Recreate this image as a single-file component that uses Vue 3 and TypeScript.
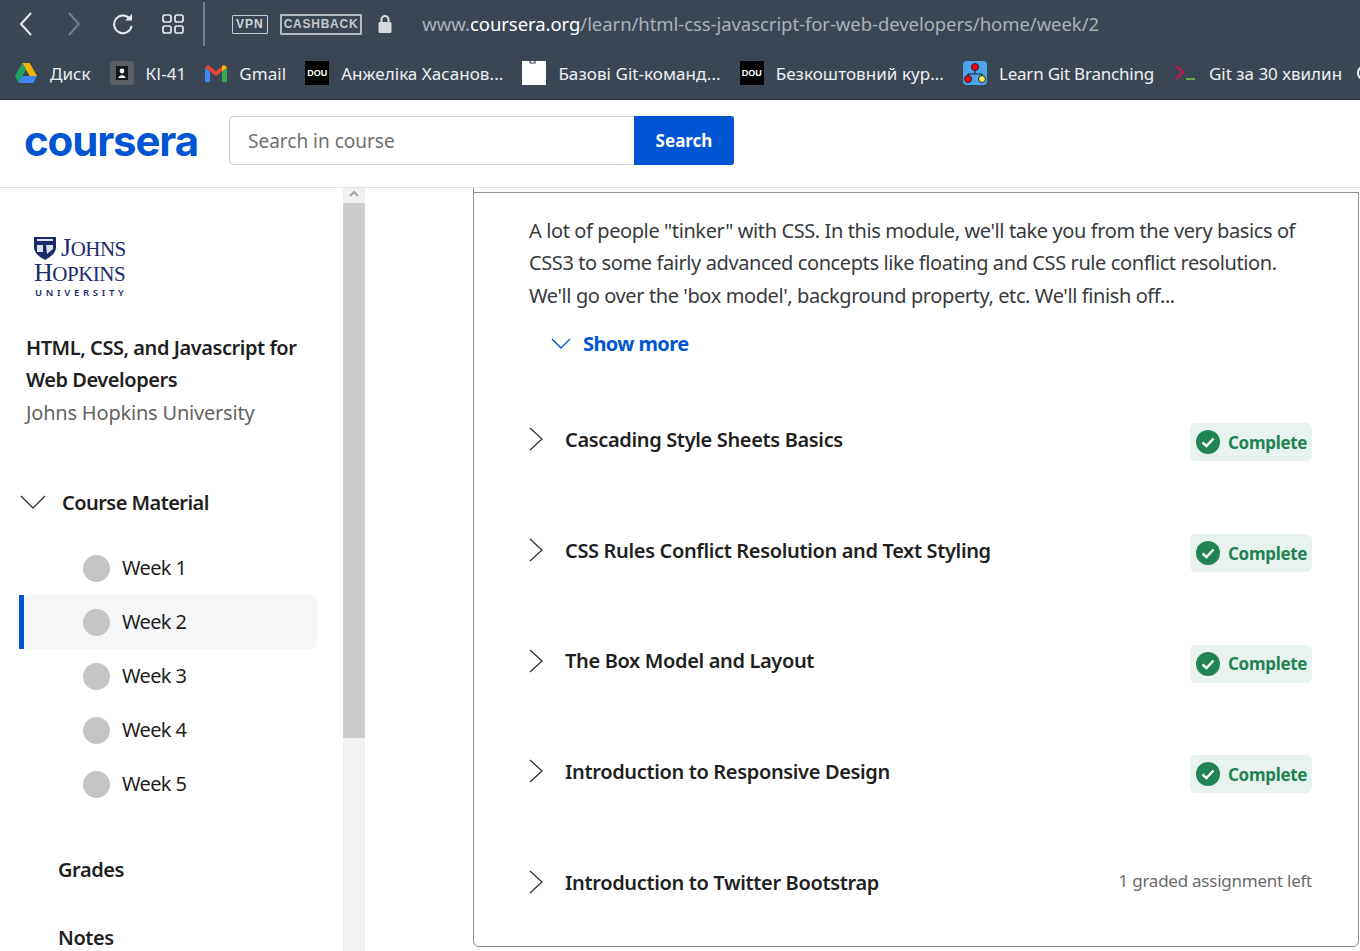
<script setup lang="ts">
const bookmarks = [
  { id: 'drive', label: 'Диск' },
  { id: 'ki', label: 'КІ-41' },
  { id: 'gmail', label: 'Gmail' },
  { id: 'dou', label: 'Анжеліка Хасанов...' },
  { id: 'sheet', label: 'Базові Git-команд...' },
  { id: 'dou', label: 'Безкоштовний кур...' },
  { id: 'branch', label: 'Learn Git Branching' },
  { id: 'term', label: 'Git за 30 хвилин' },
]
const weeks = ['Week 1', 'Week 2', 'Week 3', 'Week 4', 'Week 5']
const lessons = [
  { title: 'Cascading Style Sheets Basics', done: true },
  { title: 'CSS Rules Conflict Resolution and Text Styling', done: true },
  { title: 'The Box Model and Layout', done: true },
  { title: 'Introduction to Responsive Design', done: true },
  { title: 'Introduction to Twitter Bootstrap', done: false },
]
</script>

<template>
  <div class="page">
    <div class="browser">
      <div class="toolbar">
        <svg class="nav" width="18" height="24" viewBox="0 0 18 24"><path d="M14 1 L4 12 L14 23" fill="none" stroke="#e8eaed" stroke-width="2"/></svg>
        <svg class="nav next" width="18" height="24" viewBox="0 0 18 24"><path d="M4 1 L14 12 L4 23" fill="none" stroke="#76808c" stroke-width="2"/></svg>
        <svg class="reload" width="22" height="22" viewBox="0 0 22 22"><path d="M17.5 5.5 A8.8 8.8 0 1 0 19.6 13" fill="none" stroke="#e8eaed" stroke-width="2"/><path d="M13 7.5 H20 V1 Z" fill="#e8eaed"/></svg>
        <svg class="grid" width="22" height="22" viewBox="0 0 22 22"><g fill="none" stroke="#e8eaed" stroke-width="1.7"><rect x="1" y="2" width="8" height="7" rx="2"/><rect x="13" y="2" width="8" height="7" rx="2"/><rect x="1" y="13" width="8" height="7" rx="2"/><rect x="13" y="13" width="8" height="7" rx="2"/></g></svg>
        <div class="sep"></div>
        <span class="tag vpn">VPN</span>
        <span class="tag cash">CASHBACK</span>
        <svg class="lock" width="14" height="20" viewBox="0 0 14 20"><path d="M3.5 9 V5.5 a3.5 3.5 0 0 1 7 0 V9" fill="none" stroke="#d6dadd" stroke-width="2"/><rect x="0.5" y="8" width="13" height="11" rx="1.5" fill="#d6dadd"/></svg>
        <span class="url">www.<b>coursera.org</b>/learn/html-css-javascript-for-web-developers/home/week/2</span>
      </div>
      <div class="bookmarks">
        <div v-for="b in bookmarks" :key="b.label" class="bm" :class="'bm-' + b.id">
          <svg v-if="b.id === 'drive'" width="22" height="20" viewBox="0 0 22 20"><path d="M7.300 0 H14.700 L22 13 H14.700 Z" fill="#f5b400"/><path d="M7.300 0 L0 13 L3.700 20 L11 6.500 Z" fill="#1fa463"/><path d="M3.700 20 H18.300 L22 13 H7.300 Z" fill="#4285f4"/></svg>
          <span v-else-if="b.id === 'ki'" class="fav ki"><svg width="14" height="14" viewBox="0 0 14 14"><rect x="1" y="0" width="12" height="14" fill="#17181a"/><circle cx="7" cy="5" r="2.4" fill="#eee"/><path d="M3 12 q4 -6 8 0 Z" fill="#eee"/></svg></span>
          <svg v-else-if="b.id === 'gmail'" width="22" height="17" viewBox="0 0 22 17"><path d="M0 2.500 V17 H5 V6.500 Z" fill="#4285f4"/><path d="M22 2.500 V17 H17 V6.500 Z" fill="#34a853"/><path d="M0 2.500 L11 11 L22 2.500 L19 0 L11 6 L3 0 Z" fill="#ea4335"/><path d="M17 6.500 L22 2.500 L19 0 L17 1.500 Z" fill="#fbbc04"/></svg>
          <span v-else-if="b.id === 'dou'" class="fav dou">DOU</span>
          <svg v-else-if="b.id === 'sheet'" width="24" height="24" viewBox="0 0 24 24"><rect width="24" height="24" fill="#fff"/><path d="M8 0 V2 H13 V0" fill="none" stroke="#3a4654" stroke-width="1.200"/></svg>
          <svg v-else-if="b.id === 'branch'" width="24" height="24" viewBox="0 0 24 24"><rect width="24" height="24" rx="4" fill="#4da3ec"/><path d="M12 7 V12 M5 17 V13 H19 V17" fill="none" stroke="#222" stroke-width="1.2"/><circle cx="12" cy="6" r="3.500" fill="#f01" stroke="#222"/><circle cx="5" cy="18" r="3.500" fill="#f01" stroke="#222"/><circle cx="19" cy="18" r="3.500" fill="#ee5" stroke="#222"/></svg>
          <svg v-else width="20" height="16" viewBox="0 0 20 16"><path d="M1 1 L8 7 L1 14" fill="none" stroke="#a8224a" stroke-width="2.800"/><rect x="11" y="13" width="9" height="2" fill="#6aa84f"/></svg>
          <span class="bm-label">{{ b.label }}</span>
        </div>
        <span class="bm-clipped"></span>
      </div>
    </div>

    <header class="site-header">
      <span class="logo">coursera</span>
      <div class="search">
        <div class="search-input">Search in course</div>
        <button class="search-btn">Search</button>
      </div>
    </header>

    <div class="content">
      <aside class="side">
        <div class="side-inner">
          <div class="jhu">
            <svg class="shield" width="22" height="23" viewBox="0 0 22 23"><path d="M0 0 H22 V11 Q21 18 11 23 Q1 18 0 11 Z" fill="#1b2c6b"/><rect x="3" y="8" width="6" height="7" fill="#dfe3ef"/><path d="M12 8 L19 8 L19 12 L13 17 Z" fill="#dfe3ef"/><rect x="3" y="2" width="16" height="2" fill="#dfe3ef"/></svg>
            <div class="jhu-text">
              <div class="j1">J<small>OHNS</small></div>
              <div class="j2">H<small>OPKINS</small></div>
              <div class="j3">UNIVERSITY</div>
            </div>
          </div>
          <div class="course-title">HTML, CSS, and Javascript for<br>Web Developers</div>
          <div class="course-org">Johns Hopkins University</div>
          <div class="material">
            <svg width="26" height="14" viewBox="0 0 26 14"><path d="M1 1 L13 13 L25 1" fill="none" stroke="#333" stroke-width="1.300"/></svg>
            <span>Course Material</span>
          </div>
          <nav class="weeks">
            <div v-for="(w, i) in weeks" :key="w" class="week" :class="{ active: i === 1 }">
              <span class="dot"></span><span class="week-label">{{ w }}</span>
            </div>
          </nav>
          <div class="side-link grades">Grades</div>
          <div class="side-link notes">Notes</div>
        </div>
        <div class="scrollbar">
          <div class="sb-up"><svg width="10" height="6" viewBox="0 0 10 6"><path d="M1 5 L5 1 L9 5" fill="none" stroke="#a3a3a3" stroke-width="2"/></svg></div>
          <div class="sb-thumb"></div>
        </div>
      </aside>

      <main class="main">
        <section class="card">
          <p class="desc">A lot of people "tinker" with CSS. In this module, we'll take you from the very basics of<br>CSS3 to some fairly advanced concepts like floating and CSS rule conflict resolution.<br>We'll go over the 'box model', background property, etc. We'll finish off...</p>
          <div class="more">
            <svg width="20" height="11" viewBox="0 0 20 11"><path d="M1 1 L10 10 L19 1" fill="none" stroke="#0056d2" stroke-width="1.400"/></svg>
            <span>Show more</span>
          </div>
          <div class="lessons">
            <div v-for="l in lessons" :key="l.title" class="lesson">
              <svg class="chev" width="16" height="24" viewBox="0 0 16 24"><path d="M2 1 L14 12 L2 23" fill="none" stroke="#333" stroke-width="1.300"/></svg>
              <span class="l-title">{{ l.title }}</span>
              <span v-if="l.done" class="badge">
                <svg width="24" height="24" viewBox="0 0 24 24"><circle cx="12" cy="12" r="12" fill="#1f8354"/><path d="M6.500 12.500 L10.500 16 L17.500 8.500" fill="none" stroke="#fff" stroke-width="2.500"/></svg>
                Complete
              </span>
              <span v-else class="left">1 graded assignment left</span>
            </div>
          </div>
        </section>
      </main>
    </div>
  </div>
</template>

<style>
html, body { margin: 0; overflow: hidden; background: #fff; }
</style>

<style scoped>
.page { width: 1360px; height: 951px; display: flex; flex-direction: column; overflow: hidden; font-family: "Noto Sans", "Open Sans", sans-serif; color: #1f1f1f; }
.browser { height: 100px; background: #3a4654; flex: none; box-sizing: border-box; border-bottom: 1px solid #23282f; }
.toolbar { height: 48px; display: flex; align-items: center; padding-left: 17px; }
.next { margin-left: 30px; }
.reload { margin-left: 29px; }
.grid { margin-left: 28px; }
.sep { width: 2px; height: 44px; background: #76808c; margin-left: 19px; }
.tag { box-sizing: border-box; color: #d3d6d9; font-family: "Liberation Sans", sans-serif; font-size: 12px; border-radius: 1px; font-weight: 700; }
.vpn { border: 1px solid #c9ccd0; height: 19px; line-height: 17px; padding: 0 3px; margin-left: 27px; letter-spacing: 1px; }
.cash { border: 2px solid #b4b9bf; height: 21px; line-height: 17px; padding: 0 2px; margin-left: 12px; letter-spacing: .75px; color: #c4c8cc; }
.lock { margin-left: 16px; }
.url { margin-left: 30px; margin-top: -2px; font-size: 18.500px; color: #aab1b9; letter-spacing: -.06px; white-space: nowrap; }
.url b { font-weight: 400; color: #fff; }
.bookmarks { height: 50px; display: flex; align-items: center; padding-left: 15px; white-space: nowrap; overflow: hidden; position: relative; }
.bm { display: flex; align-items: center; font-size: 17px; color: #eef0f2; margin-left: 19px; }
.bm-drive { margin-left: 0; }
.bm-term { margin-left: 21px; }
.bm svg, .fav { flex: none; }
.bm-label { margin-left: 12px; letter-spacing: .06px; }
.bm-drive .bm-label { margin-left: 13px; }
.bm-branch .bm-label { letter-spacing: -.22px; }
.bm-term .bm-label { margin-left: 14px; letter-spacing: 0; }
.bm-clipped { position: absolute; left: 1357px; top: 17px; width: 12px; height: 12px; border: 2px solid #eef0f2; border-radius: 50%; }
.fav { display: flex; align-items: center; justify-content: center; width: 24px; height: 24px; }
.ki { background: #5a5f66; border-radius: 3px; }
.dou { background: #000; color: #fff; font: 700 9px "Liberation Sans", sans-serif; }

.site-header { height: 88px; flex: none; box-sizing: border-box; border-bottom: 1px solid #e1e1e1; display: flex; align-items: center; padding-left: 24px; background: #fff; }
.logo { font-family: "Inter", sans-serif; font-weight: 700; color: #0056d2; font-size: 42px; letter-spacing: -1.150px; width: 205px; line-height: 1; margin-bottom: 6px; }
.search { display: flex; height: 49px; margin-bottom: 6px; }
.search-input { width: 405px; box-sizing: border-box; border: 1px solid #c8cdd8; border-right: 0; border-radius: 5px 0 0 5px; line-height: 49px; padding-left: 18px; font-size: 19px; color: #6f6f6f; }
.search-btn { width: 100px; border: 0; background: #0056d2; color: #fff; font: 700 17px "Noto Sans", sans-serif; border-radius: 0 3px 3px 0; padding: 0; }

.content { flex: 1; display: flex; min-height: 0; }
.side { width: 365px; flex: none; display: flex; overflow: hidden; }
.side-inner { width: 343px; flex: none; }
.scrollbar { width: 22px; background: #f1f1f1; }
.sb-up { height: 15px; display: flex; justify-content: center; padding-top: 3px; box-sizing: border-box; }
.sb-thumb { height: 535px; background: #cdcdcd; }
.jhu { margin: 49px 0 0 34px; height: 63px; position: relative; color: #1b2c6b; font-family: "Liberation Serif", serif; }
.shield { position: absolute; left: 0; top: 0; }
.jhu-text { width: 92px; position: absolute; left: 0; top: -1px; }
.j1, .j2 { line-height: 24px; font-size: 26px; letter-spacing: -.5px; white-space: nowrap; }
.j1 small, .j2 small { font-size: 21px; }
.j1 { padding-left: 27px; }
.j3 { font: 600 9.500px/12px "Noto Sans", sans-serif; letter-spacing: 3.700px; margin-top: 1px; margin-left: 1px; white-space: nowrap; }
.course-title { margin: 32px 0 0 26px; font-weight: 600; font-size: 20px; line-height: 32px; letter-spacing: -.45px; }
.course-org { margin-left: 26px; font-size: 20px; line-height: 33px; color: #636363; letter-spacing: -.2px; }
.material { margin: 57px 0 0 20px; display: flex; align-items: center; gap: 16px; font-weight: 600; font-size: 20px; height: 32px; letter-spacing: -.55px; }
.weeks { margin: 23px 0 0 19px; width: 298px; }
.week { height: 54px; display: flex; align-items: center; padding-left: 64px; gap: 12px; font-size: 20px; box-sizing: border-box; letter-spacing: -.65px; }
.week-label { margin-bottom: 2px; }
.week.active { background: #f5f6f8; border-left: 5px solid #0056d2; padding-left: 59px; border-radius: 0 6px 6px 0; }
.dot { width: 27px; height: 27px; border-radius: 50%; background: #c4c5c7; flex: none; }
.side-link { font-weight: 600; font-size: 20px; margin-left: 58px; line-height: 32px; letter-spacing: -.45px; }
.grades { margin-top: 43px; }
.notes { margin-top: 36px; }

.main { flex: 1; padding: 4px 0 0 108px; min-width: 0; }
.card { width: 886px; height: 755px; box-sizing: border-box; border: 1px solid #8f8f8f; border-radius: 0 0 6px 6px; position: relative; }
.card::before { content: ""; position: absolute; left: -1px; top: -5px; width: 1px; height: 4px; background: #8f8f8f; }
.desc { margin: 22px 0 0 55px; font-size: 20px; line-height: 32.400px; color: #373a3c; letter-spacing: -.4px; white-space: nowrap; }
.more { margin: 15px 0 0 77px; display: flex; align-items: center; gap: 12px; height: 32px; color: #0056d2; font-weight: 700; font-size: 20px; letter-spacing: -.6px; }
.lessons { margin-top: 24.800px; }
.lesson { height: 110.700px; display: flex; align-items: center; padding: 0 46px 0 54px; box-sizing: border-box; }
.chev { flex: none; }
.l-title { margin-left: 21px; font-weight: 600; font-size: 20px; flex: 1; letter-spacing: -.35px; white-space: nowrap; }
.badge { width: 122px; height: 38px; margin-top: 6px; background: #e8f2ee; border-radius: 6px; color: #1f8354; font-weight: 700; font-size: 17px; display: flex; align-items: center; gap: 8px; padding-left: 6px; box-sizing: border-box; letter-spacing: -.3px; }
.left { color: #6b6b6b; font-size: 17px; letter-spacing: -.25px; margin-bottom: 4px; }
</style>
